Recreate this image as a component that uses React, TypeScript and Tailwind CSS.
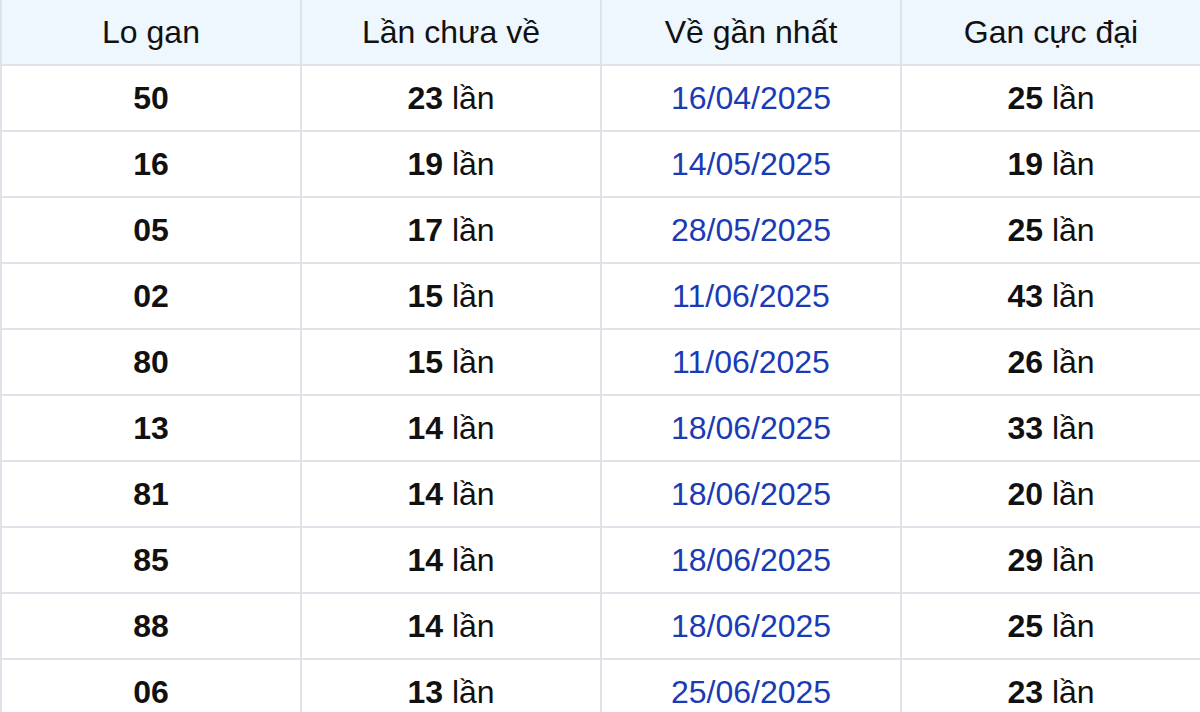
import React from "react";

const rows: [string, string, string, string][] = [
  ["50", "23", "16/04/2025", "25"],
  ["16", "19", "14/05/2025", "19"],
  ["05", "17", "28/05/2025", "25"],
  ["02", "15", "11/06/2025", "43"],
  ["80", "15", "11/06/2025", "26"],
  ["13", "14", "18/06/2025", "33"],
  ["81", "14", "18/06/2025", "20"],
  ["85", "14", "18/06/2025", "29"],
  ["88", "14", "18/06/2025", "25"],
  ["06", "13", "25/06/2025", "23"],
];

const cell =
  "h-[66px] flex items-center justify-center border-r-2 border-b-2 border-[#dfe2e8]";

export default function App() {
  return (
    <div
      className="w-[1200px] h-[712px] overflow-hidden bg-white text-[32px] text-[#111]"
      style={{ fontFamily: '"Liberation Sans", Arial, sans-serif' }}
    >
      <div className="w-[1202px] border-l-2 border-[#dfe2e8]">
        <div className="grid grid-cols-[300px_300px_300px_300px] bg-[#eef6fe]">
          <div className={cell}>Lo gan</div>
          <div className={cell}>Lần chưa về</div>
          <div className={cell}>Về gần nhất</div>
          <div className={cell}>Gan cực đại</div>
        </div>
        {rows.map((r, i) => (
          <div key={i} className="grid grid-cols-[300px_300px_300px_300px] bg-white">
            <div className={cell}>
              <span className="font-bold">{r[0]}</span>
            </div>
            <div className={cell}>
              <span>
                <span className="font-bold">{r[1]}</span> lần
              </span>
            </div>
            <div className={cell}>
              <span className="text-[#1a3bb5]">{r[2]}</span>
            </div>
            <div className={cell}>
              <span>
                <span className="font-bold">{r[3]}</span> lần
              </span>
            </div>
          </div>
        ))}
      </div>
    </div>
  );
}
